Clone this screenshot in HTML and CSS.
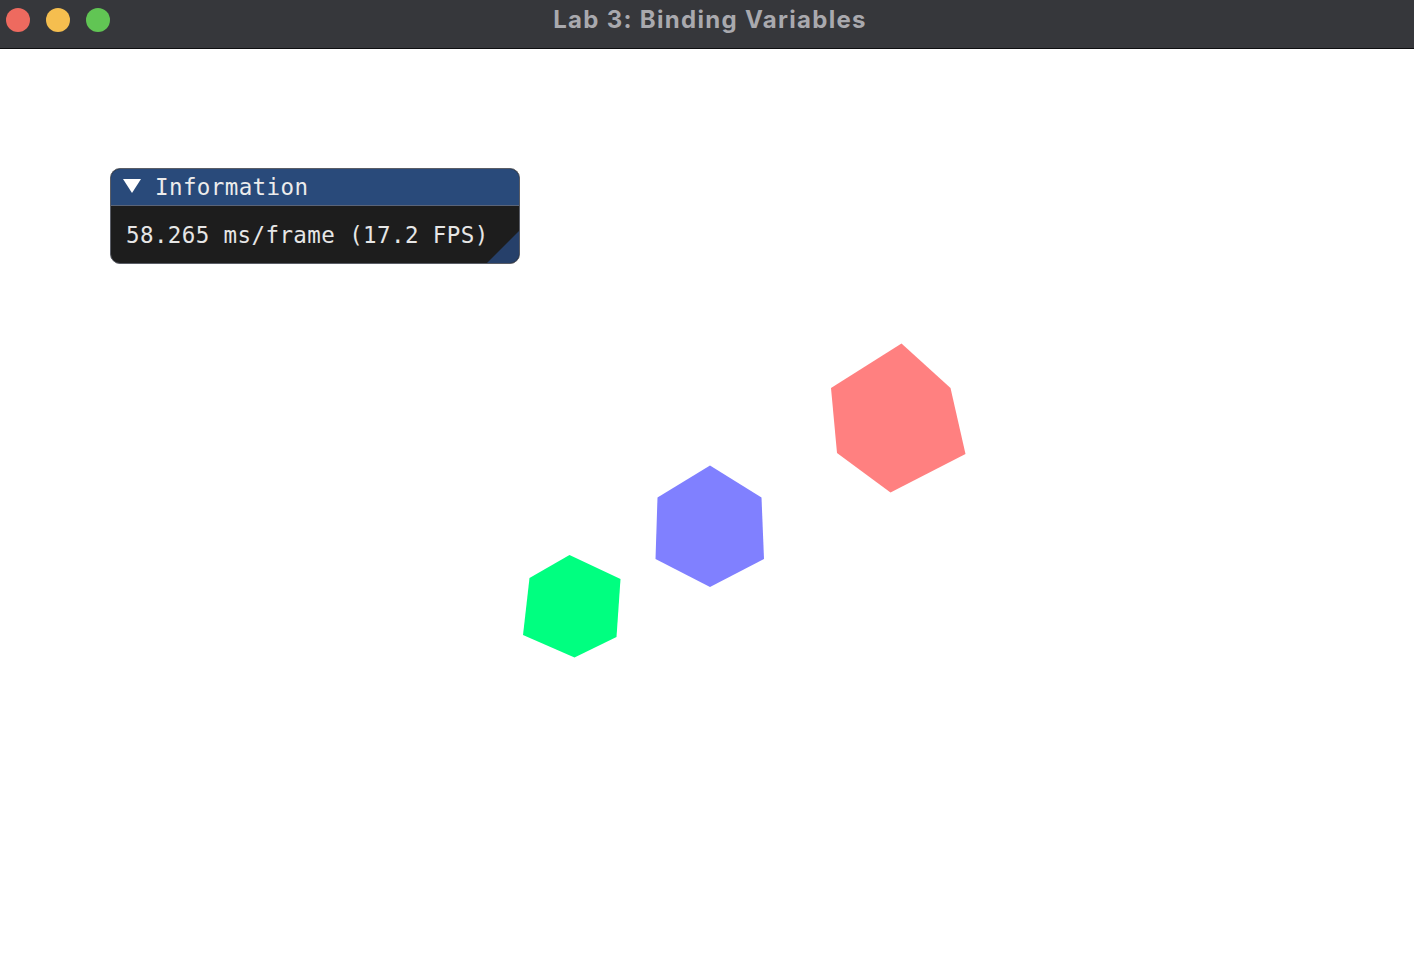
FILE: index.html
```html
<!DOCTYPE html>
<html>
<head>
<meta charset="utf-8">
<title>Lab 3: Binding Variables</title>
<link rel="stylesheet" href="styles.css">
</head>
<body>
<div class="titlebar">
  <div class="lights">
    <span class="light red"></span>
    <span class="light yellow"></span>
    <span class="light green"></span>
  </div>
  <div class="title">Lab 3: Binding Variables</div>
</div>
<div class="canvas">
  <svg class="scene" width="1414" height="931" viewBox="0 49 1414 931">
    <polygon fill="#ff8080" points="901.5,343.5 950.5,388 965.5,454 890.5,492.5 837,453 831,388"/>
    <polygon fill="#8080ff" points="710,465.5 761.5,497.5 764,559 710,587 655.5,559 657.5,497.5"/>
    <polygon fill="#00ff80" points="569.5,555 620.5,579 616.5,637 574.5,657.5 523,635 529.5,578"/>
  </svg>
  <div class="imgui">
    <div class="imgui-title">
      <svg class="arrow" width="18" height="14" viewBox="0 0 18 14"><polygon points="0,0 18,0 9,14" fill="#ffffff"/></svg>
      <span>Information</span>
    </div>
    <div class="imgui-body">58.265 ms/frame (17.2 FPS)</div>
    <div class="grip"></div>
  </div>
</div>
</body>
</html>
```
FILE: styles.css
```css
html, body {
  margin: 0;
  padding: 0;
  background: #ffffff;
  overflow: hidden;
}
.titlebar {
  position: relative;
  height: 48px;
  background: #36373b;
  border-bottom: 1px solid #0e0e10;
  display: flex;
  align-items: center;
  justify-content: center;
}
.lights {
  position: absolute;
  left: 6px;
  top: 8px;
  display: flex;
  gap: 16px;
}
.light {
  width: 24px;
  height: 24px;
  border-radius: 50%;
  display: block;
}
.red { background: #ee6a5f; }
.yellow { background: #f5be4f; }
.green { background: #61c554; }
.title {
  font-family: Inter, "Noto Sans", sans-serif;
  font-weight: 700;
  font-size: 24px;
  color: #a9a9ae;
  margin-top: -10px;
  margin-left: 6px;
  letter-spacing: 1.3px;
}
.canvas {
  position: relative;
  height: 931px;
}
.scene {
  display: block;
}
.imgui {
  position: absolute;
  left: 110px;
  top: 119px;
  width: 408px;
  height: 94px;
  border: 1px solid #5a5d66;
  border-radius: 10px;
  overflow: hidden;
  background: #1d1d1d;
  display: flex;
  flex-direction: column;
}
.imgui-title {
  height: 36px;
  background: #294a7a;
  border-bottom: 1px solid #5a6478;
  display: flex;
  align-items: center;
  gap: 14px;
  padding-left: 12px;
  font-family: "DejaVu Sans Mono", monospace;
  font-size: 22.5px;
  color: #ececec;
  letter-spacing: 0.4px;
}
.arrow { display: block; margin-top: -2px; }
.imgui-body {
  flex: 1;
  padding: 17px 0 0 15px;
  font-family: "DejaVu Sans Mono", monospace;
  font-size: 22.5px;
  line-height: 24px;
  color: #e6e6e6;
  letter-spacing: 0.4px;
}
.grip {
  position: absolute;
  right: 0;
  bottom: 0;
  width: 0;
  height: 0;
  border-left: 32px solid transparent;
  border-bottom: 32px solid #26406a;
}
```
